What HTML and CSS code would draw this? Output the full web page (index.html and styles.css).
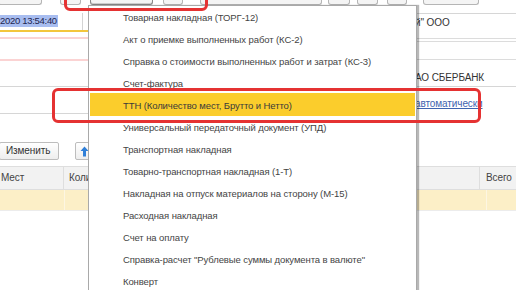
FILE: index.html
```html
<!DOCTYPE html>
<html>
<head>
<meta charset="utf-8">
<link rel="stylesheet" href="styles.css">
</head>
<body>
<div class="page">
  <div class="toolbar">
    <div class="tb b1"></div>
    <div class="tb b2"></div>
    <div class="tb b3"></div>
    <div class="tb b4"></div>
    <div class="tb b5"></div>
    <div class="tb b6"></div>
    <div class="tb b7"></div>
    <div class="tb b8"></div>
    <div class="tb b9"></div>
  </div>

  <div class="form">
    <div class="row r1">
      <div class="left"><div class="date"><span class="sel">2020 13:54:40</span></div></div>
      <div class="right"><div class="fld f1">й" ООО</div></div>
    </div>
    <div class="row r2">
      <div class="left"><div class="pink p1"></div><div class="pink p2"></div></div>
      <div class="right"><div class="rl l1"></div><div class="rl l2"></div><div class="rl l3"></div></div>
    </div>
    <div class="row r3">
      <div class="left"></div>
      <div class="right"><div class="txt bank">АО СБЕРБАНК</div></div>
    </div>
    <div class="row r4">
      <div class="left"></div>
      <div class="right"><a class="link">автоматически</a></div>
    </div>
  </div>

  <div class="buttons">
    <div class="btn">Изменить</div>
    <div class="btn icon">
      <svg width="9" height="11" viewBox="0 0 9 11"><path d="M4.5 0.5 L8.5 5 L6 5 L6 10.5 L3 10.5 L3 5 L0.5 5 Z" fill="#2f7fd8"/></svg>
    </div>
  </div>

  <div class="table">
    <div class="thead">
      <div class="th c1">Мест</div>
      <div class="th c2">Коли</div>
      <div class="th c3">Всего</div>
    </div>
    <div class="trow">
      <div class="td c1"></div>
      <div class="td c2"></div>
      <div class="td c3"></div>
    </div>
  </div>

  <div class="menu">
    <div class="item">Товарная накладная (ТОРГ-12)</div>
    <div class="item">Акт о приемке выполненных работ (КС-2)</div>
    <div class="item">Справка о стоимости выполненных работ и затрат (КС-3)</div>
    <div class="item">Счет-фактура</div>
    <div class="item active">ТТН (Количество мест, Брутто и Нетто)</div>
    <div class="item">Универсальный передаточный документ (УПД)</div>
    <div class="item">Транспортная накладная</div>
    <div class="item">Товарно-транспортная накладная (1-Т)</div>
    <div class="item">Накладная на отпуск материалов на сторону (М-15)</div>
    <div class="item">Расходная накладная</div>
    <div class="item">Счет на оплату</div>
    <div class="item">Справка-расчет "Рублевые суммы документа в валюте"</div>
    <div class="item">Конверт</div>
  </div>

  <div class="mark mark1"></div>
  <div class="mark mark2"></div>
</div>
</body>
</html>
```

FILE: styles.css
```css
html, body {
  margin: 0;
  padding: 0;
  background: #fff;
}
.page {
  position: relative;
  width: 516px;
  height: 290px;
  overflow: hidden;
  font-family: "Liberation Sans", Arial, sans-serif;
  font-size: 9.5px;
  letter-spacing: -0.1px;
  color: #444;
}

/* toolbar */
.toolbar {
  display: flex;
  height: 5px;
}
.tb {
  border: 1px solid #b5b5b5;
  border-top: none;
  border-radius: 0 0 3px 3px;
  background: #f4f4f4;
  box-sizing: border-box;
  height: 5px;
}
.b1 { width: 44px; margin-left: -2px; }
.b2 { width: 21px; margin-left: 18px; }
.b3 { width: 63px; margin-left: 9px; border-color: #888; box-shadow: inset 0 -1px 0 #ccc; }
.b4 { width: 20px; margin-left: 10px; }
.b5 { width: 122px; margin-left: 17px; }
.b6 { width: 22px; margin-left: 6px; }
.b7 { width: 21px; margin-left: 7px; }
.b8 { width: 20px; margin-left: 9px; }
.b9 { width: 56px; margin-left: 16px; }

/* form */
.form {
  margin-top: 8px;
}
.row {
  display: flex;
}
.left {
  width: 88px;
  flex: none;
}
.right {
  margin-left: 327px;
  flex: 1;
}
.r1 { height: 19px; }
.r1 .left {
  border-bottom: 2px solid #f3c63c;
  box-sizing: border-box;
}
.date {
  width: 83px;
  height: 17px;
  border-right: 1px solid #d4d4d4;
  box-sizing: border-box;
  padding-top: 2px;
}
.sel {
  display: inline-block;
  background: #a8bdf0;
  color: #1d2550;
  font-size: 9.5px;
  letter-spacing: -0.3px;
  line-height: 12px;
  padding: 0 1px;
  margin-left: -1px;
}
.fld {
  border-top: 1px solid #d6d6d6;
  height: 19px;
  box-sizing: border-box;
  padding-top: 3px;
  font-size: 10px;
  color: #333;
  line-height: 12px;
}

.r2 { height: 30px; }
.pink {
  height: 2px;
  background: #fbd3d3;
}
.p1 { margin-top: 5px; }
.p2 { margin-top: 20px; }
.rl {
  height: 1px;
  background: #dcdcdc;
}
.l1 { margin-top: 6px; }
.l2 { margin-top: 2px; }
.l3 { margin-top: 17px; }

.r3 {
  height: 24px;
  border-bottom: 1px solid #d6d6d6;
}
.txt {
  padding-top: 10px;
  font-size: 10px;
  color: #333;
  line-height: 12px;
}
.r4 { height: 27px; }
.r4 .left {
  border-bottom: 1px solid #d6d6d6;
  height: 26px;
}
.link {
  display: block;
  padding-top: 11px;
  font-size: 10px;
  line-height: 12px;
  color: #3f64b0;
  text-decoration: underline;
}

/* buttons */
.buttons {
  display: flex;
  gap: 16px;
  margin-top: 28px;
  height: 18px;
}
.btn {
  height: 18px;
  box-sizing: border-box;
  border: 1px solid #bdbdbd;
  border-radius: 2px;
  background: linear-gradient(#ffffff, #eeeeee);
  padding: 0 8px 0 6px;
  line-height: 16px;
  font-size: 10px;
  color: #333;
  margin-left: -1px;
}
.btn.icon {
  width: 30px;
  padding: 3px 0 0 4px;
  margin-left: 0;
}
.btn.icon svg { display: block; }

/* table */
.table {
  margin-top: 6px;
}
.thead {
  display: flex;
  height: 24px;
  background: #f2f2f2;
  border-top: 1px solid #dedede;
  border-bottom: 1px solid #dedede;
  box-sizing: border-box;
}
.th {
  line-height: 22px;
  font-size: 10px;
  color: #444;
  box-sizing: border-box;
}
.c1 { width: 63px; padding-left: 1px; }
.c2 { width: 416px; padding-left: 5px; border-left: 1px solid #dedede; }
.c3 { flex: 1; padding-left: 6px; border-left: 1px solid #dedede; }
.trow {
  display: flex;
  height: 20px;
  background: #fcefc7;
  border-bottom: 1px solid #ececec;
}
.td.c2, .td.c3 { border-left: 1px solid #fdf6e2; }

/* dropdown menu */
.menu {
  position: absolute;
  left: 88px;
  top: 5px;
  width: 329px;
  height: 300px;
  box-sizing: border-box;
  background: #fff;
  border: 1px solid #a9a9a9;
  box-shadow: 2px 0 1px rgba(0, 0, 0, 0.28);
}
.item {
  height: 22px;
  line-height: 23px;
  padding-left: 33px;
  font-size: 9.5px;
  color: #444;
  white-space: nowrap;
  margin: 0 1px;
}
.item.active {
  background: #fbcd2c;
  color: #3a3a3a;
  height: 23px;
  margin-top: -1px;
  line-height: 25px;
}

/* red annotation boxes */
.mark {
  position: absolute;
  border: 3px solid #e53232;
  border-radius: 6px;
  box-sizing: border-box;
}
.mark1 {
  left: 64px;
  top: -12px;
  width: 144px;
  height: 23px;
}
.mark2 {
  left: 52px;
  top: 88px;
  width: 429px;
  height: 35px;
}
```
